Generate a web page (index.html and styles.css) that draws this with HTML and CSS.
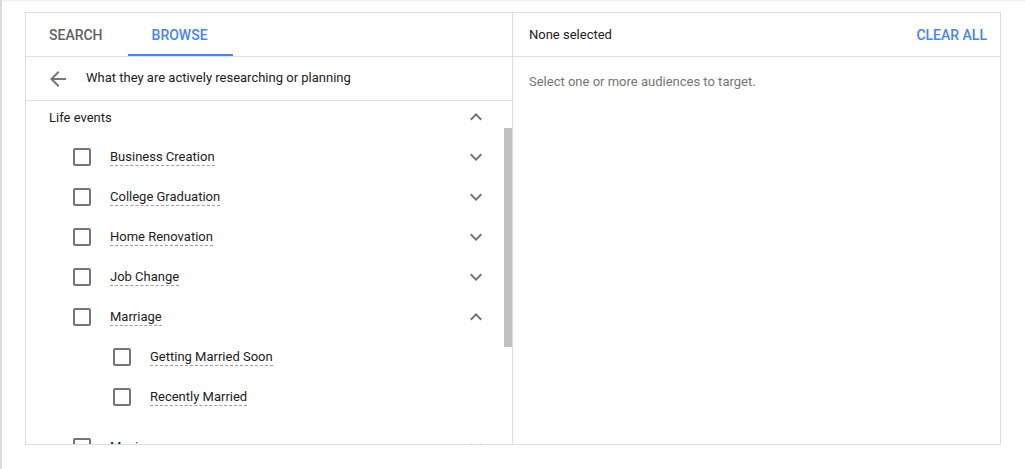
FILE: index.html
```html
<!DOCTYPE html>
<html lang="en">
<head>
    <meta charset="UTF-8">
    <meta name="viewport" content="width=device-width, initial-scale=1.0">
    <title>Audience Picker</title>
    <link rel="stylesheet" href="styles.css">
</head>
<body>
    <div class="page">
        <div class="picker">
            <section class="browse">
                <div class="tabs">
                    <div class="tab">Search</div>
                    <div class="tab active">Browse</div>
                </div>

                <div class="crumb">
                    <svg class="back" width="24" height="24" viewBox="0 0 24 24"><path d="M20 11H7.83l5.59-5.59L12 4l-8 8 8 8 1.41-1.41L7.83 13H20v-2z"/></svg>
                    <span class="crumb-text">What they are actively researching or planning</span>
                </div>

                <div class="tree">
                    <div class="group-head">
                        <span class="group-name">Life events</span>
                        <svg class="chev" width="24" height="24" viewBox="0 0 24 24"><path d="M12 8l-6 6 1.41 1.41L12 10.83l4.59 4.58L18 14z"/></svg>
                    </div>

                    <div class="row">
                        <span class="box"></span>
                        <span class="label"><span class="name">Business Creation</span></span>
                        <svg class="chev" width="24" height="24" viewBox="0 0 24 24"><path d="M16.59 8.59L12 13.17 7.41 8.59 6 10l6 6 6-6z"/></svg>
                    </div>
                    <div class="row">
                        <span class="box"></span>
                        <span class="label"><span class="name">College Graduation</span></span>
                        <svg class="chev" width="24" height="24" viewBox="0 0 24 24"><path d="M16.59 8.59L12 13.17 7.41 8.59 6 10l6 6 6-6z"/></svg>
                    </div>
                    <div class="row">
                        <span class="box"></span>
                        <span class="label"><span class="name">Home Renovation</span></span>
                        <svg class="chev" width="24" height="24" viewBox="0 0 24 24"><path d="M16.59 8.59L12 13.17 7.41 8.59 6 10l6 6 6-6z"/></svg>
                    </div>
                    <div class="row">
                        <span class="box"></span>
                        <span class="label"><span class="name">Job Change</span></span>
                        <svg class="chev" width="24" height="24" viewBox="0 0 24 24"><path d="M16.59 8.59L12 13.17 7.41 8.59 6 10l6 6 6-6z"/></svg>
                    </div>
                    <div class="row">
                        <span class="box"></span>
                        <span class="label"><span class="name">Marriage</span></span>
                        <svg class="chev" width="24" height="24" viewBox="0 0 24 24"><path d="M12 8l-6 6 1.41 1.41L12 10.83l4.59 4.58L18 14z"/></svg>
                    </div>
                    <div class="children">
                        <div class="row sub">
                            <span class="box"></span>
                            <span class="label"><span class="name">Getting Married Soon</span></span>
                        </div>
                        <div class="row sub">
                            <span class="box"></span>
                            <span class="label"><span class="name">Recently Married</span></span>
                        </div>
                    </div>
                    <div class="row">
                        <span class="box"></span>
                        <span class="label"><span class="name">Moving</span></span>
                        <svg class="chev" width="24" height="24" viewBox="0 0 24 24"><path d="M16.59 8.59L12 13.17 7.41 8.59 6 10l6 6 6-6z"/></svg>
                    </div>
                </div>

                <div class="scroll-thumb"></div>
            </section>

            <section class="selected">
                <div class="sel-head">
                    <span>None selected</span>
                    <button class="clear">Clear all</button>
                </div>
                <p class="empty">Select one or more audiences to target.</p>
            </section>
        </div>
    </div>
</body>
</html>
```

FILE: styles.css
```css
body {
    margin: 0;
    padding: 0;
    font-family: Roboto, 'Liberation Sans', Arial, sans-serif;
    background-color: #fff;
    color: #212121;
    font-size: 13px;
}

.page {
    height: 469px;
    box-sizing: border-box;
    border-left: 2px solid #dcdcdc;
    padding: 12px 0 0 23px;
    box-shadow: inset 0 2px 2px -1px rgba(0, 0, 0, 0.08);
}

.picker {
    display: flex;
    width: 976px;
    height: 433px;
    box-sizing: border-box;
    border: 1px solid #dedede;
}

.browse {
    position: relative;
    width: 486px;
    border-right: 1px solid #dedede;
    display: flex;
    flex-direction: column;
    overflow: hidden;
}

.tabs {
    display: flex;
    height: 43px;
    border-bottom: 1px solid #e0e0e0;
}

.tab {
    display: flex;
    align-items: center;
    padding: 2px 25px 0 23px;
    font-size: 14px;
    font-weight: 500;
    text-transform: uppercase;
    color: #616161;
    box-sizing: border-box;
    border-bottom: 2px solid transparent;
}

.tab.active {
    color: #4285f4;
    border-bottom-color: #4285f4;
    padding: 2px 25px 0 24px;
}

.crumb {
    display: flex;
    align-items: center;
    height: 43px;
    border-bottom: 1px solid #e0e0e0;
    padding-left: 20px;
    color: #212121;
}

.crumb-text {
    margin-bottom: 2px;
}

.back {
    fill: #757575;
    margin-right: 16px;
}

.tree {
    flex: 1;
    overflow: hidden;
}

.group-head {
    display: flex;
    align-items: center;
    height: 32px;
    padding: 0 24px 0 23px;
    margin-bottom: 4px;
}

.group-name {
    flex: 1;
}

.chev {
    fill: #757575;
}

.row {
    display: flex;
    align-items: center;
    height: 40px;
    padding: 0 24px 0 47px;
}

.children {
    padding-bottom: 10px;
}

.row.sub {
    padding-left: 87px;
}

.box {
    width: 18px;
    height: 18px;
    box-sizing: border-box;
    border: 2px solid #757575;
    border-radius: 2px;
    margin-right: 19px;
    flex-shrink: 0;
}

.label {
    flex: 1;
    margin-bottom: 2px;
}

.name {
    border-bottom: 1px dashed #9e9e9e;
    padding-bottom: 1px;
}

.scroll-thumb {
    position: absolute;
    right: 0;
    top: 115px;
    width: 8px;
    height: 219px;
    background-color: #c1c1c1;
}

.selected {
    flex: 1;
    display: flex;
    flex-direction: column;
}

.sel-head {
    display: flex;
    align-items: center;
    justify-content: space-between;
    height: 43px;
    border-bottom: 1px solid #e0e0e0;
    padding: 0 13px 0 16px;
}

.clear {
    border: none;
    background: none;
    padding: 0;
    font-family: inherit;
    font-size: 14px;
    font-weight: 500;
    text-transform: uppercase;
    color: #4285f4;
    cursor: pointer;
}

.empty {
    margin: 0;
    padding: 17px 16px 16px;
    line-height: 16px;
    color: #757575;
}
```
